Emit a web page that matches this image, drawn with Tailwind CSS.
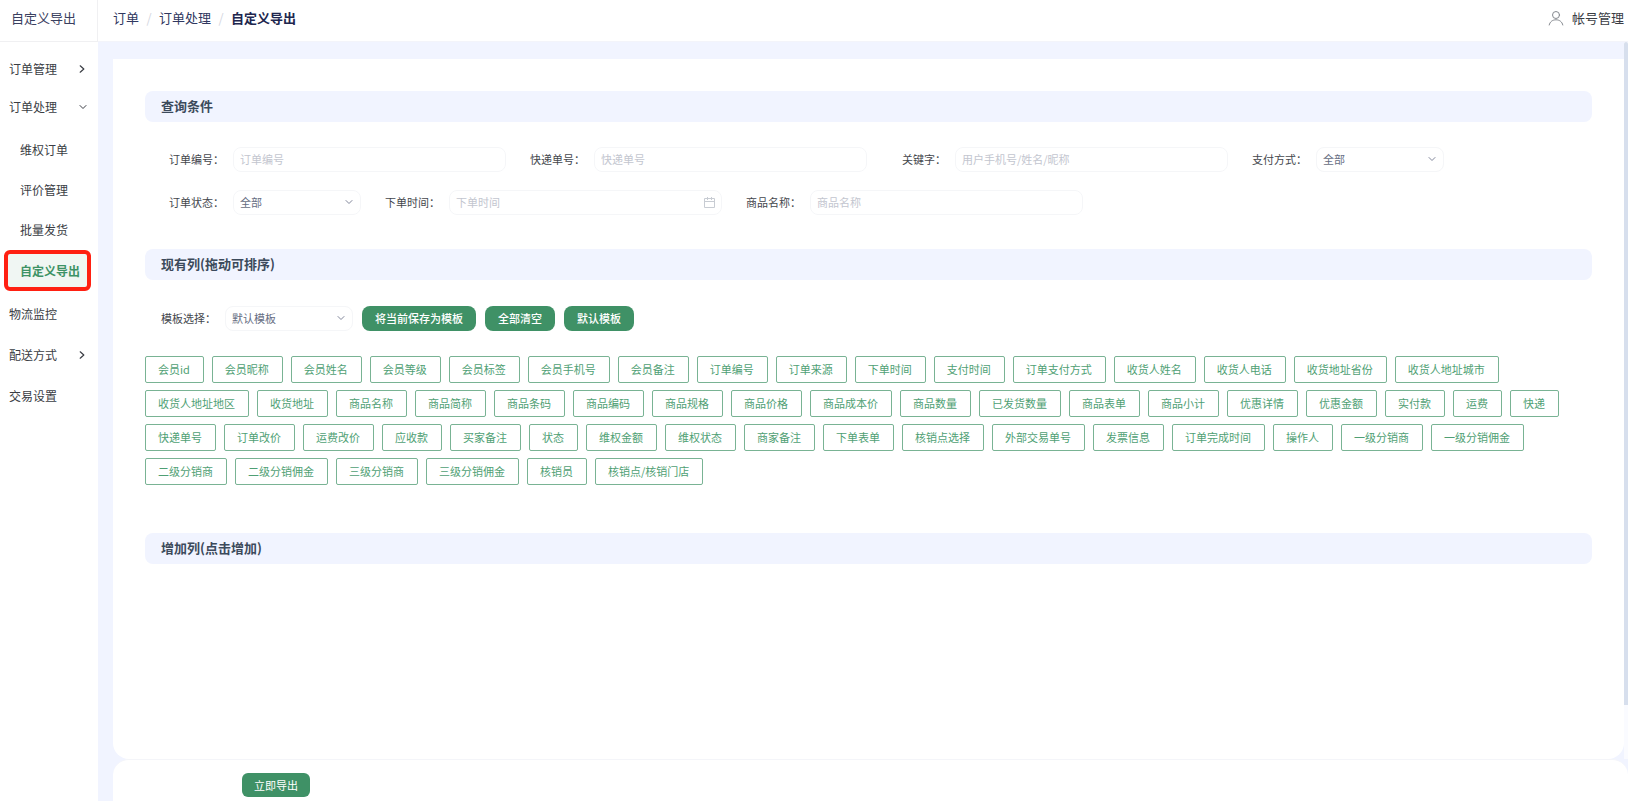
<!DOCTYPE html>
<html lang="zh-CN">
<head>
<meta charset="utf-8">
<meta name="viewport" content="width=device-width, initial-scale=1">
<title>自定义导出</title>
<script src="https://cdn.jsdelivr.net/npm/@tailwindcss/browser@4"></script>
</head>
<body class="flex h-screen overflow-hidden bg-white font-['Noto_Sans_CJK_SC',sans-serif] text-[11px] text-[#44474d]">
<svg class="hidden" aria-hidden="true">
  <symbol id="down" viewBox="0 0 8 8"><path d="M1 2.5 4 5.5 7 2.5" fill="none" stroke="currentColor" stroke-linecap="round" stroke-linejoin="round"/></symbol>
  <symbol id="right" viewBox="0 0 8 8"><path d="M2.2 .8 5.8 4 2.2 7.2" fill="none" stroke="currentColor" stroke-width="1.2" stroke-linecap="round" stroke-linejoin="round"/></symbol>
</svg>

<aside class="flex w-[98px] shrink-0 flex-col">
  <div class="flex h-[42px] items-center border-r border-b border-[#f0f0f2] pb-1.5 pl-[11px] text-[13px] whitespace-nowrap text-[#3a4060]">自定义导出</div>
  <nav class="flex flex-col pt-2 text-xs text-[#3a3d44]">
    <a href="#" class="flex h-[38px] items-center justify-between pr-3 pl-[9px]">订单管理<svg class="size-[8px]"><use href="#right"/></svg></a>
    <a href="#" class="flex h-[38px] items-center justify-between pr-[11px] pl-[9px]">订单处理<svg class="size-[8px]"><use href="#down"/></svg></a>
    <div class="mt-1 mb-[3px] flex flex-col">
      <a href="#" class="flex h-10 items-center pl-5">维权订单</a>
      <a href="#" class="flex h-10 items-center pl-5">评价管理</a>
      <a href="#" class="flex h-10 items-center pl-5">批量发货</a>
      <a href="#" aria-current="page" class="mr-[7px] ml-1 flex h-[41px] items-center rounded-md border-4 border-[#ff2012] bg-[#f0f6f3] pl-3 font-bold whitespace-nowrap text-[#3d9265]">自定义导出</a>
    </div>
    <a href="#" class="flex h-10 items-center pl-[9px]">物流监控</a>
    <a href="#" class="flex h-[41px] items-center justify-between pr-3 pl-[9px]">配送方式<svg class="size-[8px]"><use href="#right"/></svg></a>
    <a href="#" class="flex h-[41px] items-center pl-[9px]">交易设置</a>
  </nav>
</aside>

<div class="flex min-w-0 flex-1 flex-col bg-[#f1f4ff]">
  <header class="flex h-[42px] shrink-0 items-center justify-between border-b border-[#f3f4fa] bg-white pr-1 pb-1.5 pl-[15px] text-[13px]">
    <nav class="flex items-center text-[#303860]" aria-label="面包屑">
      <a href="#">订单</a>
      <span class="w-5 text-center text-[#d5d8df]">/</span>
      <a href="#">订单处理</a>
      <span class="w-5 text-center text-[#d5d8df]">/</span>
      <span class="font-bold text-[#20264e]">自定义导出</span>
    </nav>
    <a href="#" class="flex items-center gap-2 text-[#3a3d44]">
      <svg class="size-4" viewBox="0 0 16 16" fill="none" stroke="#85898f" stroke-linecap="round"><circle cx="8" cy="5" r="3.5"/><path d="M1.2 15C2 11.5 4.700 9.800 8 9.800s6 1.700 6.800 5.200"/></svg>
      帐号管理
    </a>
  </header>

  <div class="flex min-h-0 flex-1">
    <main class="mt-[17px] ml-[15px] min-w-0 flex-1 overflow-hidden rounded-b-2xl bg-white px-8 pt-8">
      <section>
        <h2 class="flex h-[31px] items-center rounded-lg bg-[#f1f4ff] pb-px pl-4 text-[13px] font-bold text-[#3c4a5b]">查询条件</h2>
        <form class="flex flex-col gap-[18px] pt-[25px] pl-6">
          <div class="flex flex-wrap gap-6">
            <div class="flex items-center"><label for="order-no" class="w-16 pr-[9px] text-right">订单编号：</label><input id="order-no" type="text" placeholder="订单编号" class="h-[25px] w-[273px] rounded-lg border border-[#f5f6f8] px-1.5 pb-0.5 placeholder:text-[#c3c6cf]"></div>
            <div class="flex items-center"><label for="express-no" class="w-16 pr-[9px] text-right">快递单号：</label><input id="express-no" type="text" placeholder="快递单号" class="h-[25px] w-[273px] rounded-lg border border-[#f5f6f8] px-1.5 pb-0.5 placeholder:text-[#c3c6cf]"></div>
            <div class="flex items-center"><label for="keyword" class="w-16 pr-[9px] text-right">关键字：</label><input id="keyword" type="text" placeholder="用户手机号/姓名/昵称" class="h-[25px] w-[273px] rounded-lg border border-[#f5f6f8] px-1.5 pb-0.5 placeholder:text-[#c3c6cf]"></div>
            <div class="flex items-center"><label for="pay" class="w-16 pr-[9px] text-right">支付方式：</label>
              <div class="relative"><select id="pay" class="block h-[25px] w-32 appearance-none rounded-lg border border-[#f5f6f8] px-1.5 text-[#666d82]"><option>全部</option></select><svg class="pointer-events-none absolute top-2 right-2 size-[8px] text-[#81869a]"><use href="#down"/></svg></div></div>
          </div>
          <div class="flex flex-wrap gap-6">
            <div class="flex items-center"><label for="status" class="w-16 pr-[9px] text-right">订单状态：</label>
              <div class="relative"><select id="status" class="block h-[25px] w-32 appearance-none rounded-lg border border-[#f5f6f8] px-1.5 text-[#666d82]"><option>全部</option></select><svg class="pointer-events-none absolute top-2 right-2 size-[8px] text-[#81869a]"><use href="#down"/></svg></div></div>
            <div class="flex items-center"><label for="time" class="w-16 pr-[9px] text-right">下单时间：</label>
              <div class="relative"><input id="time" type="text" placeholder="下单时间" class="block h-[25px] w-[273px] rounded-lg border border-[#f5f6f8] px-1.5 pb-0.5 placeholder:text-[#c3c6cf]"><svg class="pointer-events-none absolute top-[7px] right-[7px] size-[11px]" viewBox="0 0 11 11" fill="none" stroke="#c8ccd3"><path d="M.5 1.500h10v9H.5zM.5 4.500h10M3.500 0v3M7.500 0v3"/></svg></div></div>
            <div class="flex items-center"><label for="goods" class="w-16 pr-[9px] text-right">商品名称：</label><input id="goods" type="text" placeholder="商品名称" class="h-[25px] w-[273px] rounded-lg border border-[#f5f6f8] px-1.5 pb-0.5 placeholder:text-[#c3c6cf]"></div>
          </div>
        </form>
      </section>

      <section class="mt-[34px]">
        <h2 class="flex h-[31px] items-center rounded-lg bg-[#f1f4ff] pb-px pl-4 text-[13px] font-bold text-[#3c4a5b]">现有列(拖动可排序)</h2>
        <div class="mt-[26px] flex items-center gap-[9px] pl-4">
          <div class="flex items-center"><label for="tpl" class="w-16">模板选择：</label>
            <div class="relative"><select id="tpl" class="block h-[25px] w-32 appearance-none rounded-lg border border-[#f5f6f8] px-1.5 text-[#666d82]"><option>默认模板</option></select><svg class="pointer-events-none absolute top-2 right-2 size-[8px] text-[#81869a]"><use href="#down"/></svg></div></div>
          <button type="button" class="h-[25px] rounded-lg bg-[#3f9166] px-[13px] font-medium text-white">将当前保存为模板</button>
          <button type="button" class="h-[25px] rounded-lg bg-[#3f9166] px-[13px] font-medium text-white">全部清空</button>
          <button type="button" class="h-[25px] rounded-lg bg-[#3f9166] px-[13px] font-medium text-white">默认模板</button>
        </div>
        <ul id="columns" class="mt-[25px] flex flex-wrap gap-x-2 gap-y-[7px] text-[#4f9f74]"></ul>
      </section>

      <section class="mt-12">
        <h2 class="flex h-[31px] items-center rounded-lg bg-[#f1f4ff] pb-px pl-4 text-[13px] font-bold text-[#3c4a5b]">增加列(点击增加)</h2>
      </section>
    </main>
    <div class="w-1 shrink-0 bg-[#fafbff]" aria-hidden="true"><div class="h-[92.500%] rounded-t-sm bg-[#d7dfed]"></div></div>
  </div>

  <footer class="ml-[15px] flex h-[42px] shrink-0 items-end rounded-t-2xl border-t border-[#f4f5f9] bg-white pb-1 pl-[129px]">
    <button type="button" class="h-6 rounded-md bg-[#3f9166] px-3 text-white">立即导出</button>
  </footer>
</div>

<script>
const names = '会员id 会员昵称 会员姓名 会员等级 会员标签 会员手机号 会员备注 订单编号 订单来源 下单时间 支付时间 订单支付方式 收货人姓名 收货人电话 收货地址省份 收货人地址城市 收货人地址地区 收货地址 商品名称 商品简称 商品条码 商品编码 商品规格 商品价格 商品成本价 商品数量 已发货数量 商品表单 商品小计 优惠详情 优惠金额 实付款 运费 快递 快递单号 订单改价 运费改价 应收款 买家备注 状态 维权金额 维权状态 商家备注 下单表单 核销点选择 外部交易单号 发票信息 订单完成时间 操作人 一级分销商 一级分销佣金 二级分销商 二级分销佣金 三级分销商 三级分销佣金 核销员 核销点/核销门店'.split(' ');
document.getElementById('columns').innerHTML = names.map(n =>
  `<li><button type="button" class="flex h-[27px] items-center rounded-xs border border-[#79b394] pr-[13px] pl-3">${n}</button></li>`).join('');
</script>
</body>
</html>
